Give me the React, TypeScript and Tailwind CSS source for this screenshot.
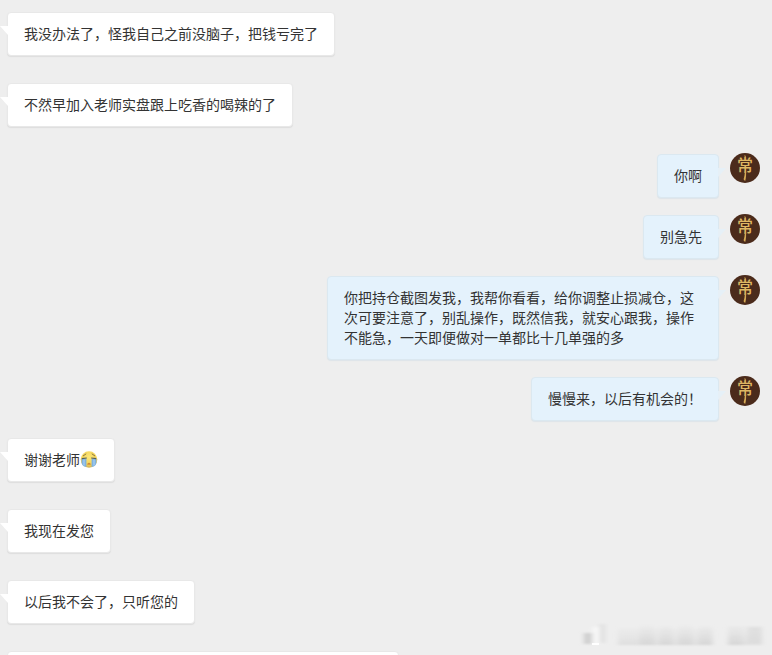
import React from "react";

type Message = {
  id: number;
  from: "student" | "teacher";
  text: string;
  crying?: boolean;
};

const messages: Message[] = [
  { id: 1, from: "student", text: "我没办法了，怪我自己之前没脑子，把钱亏完了" },
  { id: 2, from: "student", text: "不然早加入老师实盘跟上吃香的喝辣的了" },
  { id: 3, from: "teacher", text: "你啊" },
  { id: 4, from: "teacher", text: "别急先" },
  {
    id: 5,
    from: "teacher",
    text: "你把持仓截图发我，我帮你看看，给你调整止损减仓，这次可要注意了，别乱操作，既然信我，就安心跟我，操作不能急，一天即便做对一单都比十几单强的多",
  },
  { id: 6, from: "teacher", text: "慢慢来，以后有机会的！" },
  { id: 7, from: "student", text: "谢谢老师", crying: true },
  { id: 8, from: "student", text: "我现在发您" },
  { id: 9, from: "student", text: "以后我不会了，只听您的" },
];

function CryingFace() {
  return (
    <svg viewBox="0 0 18 18" className="inline-block h-[18px] w-[18px] align-middle" aria-label="大哭">
      <defs>
        <radialGradient id="face" cx="50%" cy="35%" r="65%">
          <stop offset="0" stopColor="#fbe77c" />
          <stop offset="0.7" stopColor="#f3d255" />
          <stop offset="1" stopColor="#cfb057" />
        </radialGradient>
      </defs>
      <circle cx="9" cy="9.500" r="8.300" fill="url(#face)" />
      <path d="M3 6 6.200 3.800M11.800 3.800 15 6" stroke="#7d6a3c" strokeWidth="0.9" fill="none" />
      <path d="M1.600 9h4.800v7.800c-2.600.4-4.800-1.800-4.800-4.800zM16.400 9h-4.800v7.800c2.600.4 4.800-1.800 4.800-4.800z" fill="#7fb2e0" />
      <path d="M4 9.400v6M14 9.400v6" stroke="#a9d0ee" strokeWidth="1.200" />
      <path d="M1.800 8.600 6.800 8M16.200 8.600l-5-.6" stroke="#4f5f66" strokeWidth="1.200" fill="none" />
      <path d="M7.200 14.800c0-2.800 3.600-2.800 3.600 0z" fill="#cf8a3a" />
    </svg>
  );
}

function Avatar() {
  return (
    <svg viewBox="0 0 30 30" className="-mt-px h-[30px] w-[30px] shrink-0" role="img">
      <circle cx="15" cy="15" r="15" fill="#4b2b1b" />
      <text
        x="15"
        y="18"
        textAnchor="middle"
        fontSize="16"
        fontWeight="500"
        fontFamily="'Noto Sans CJK SC', sans-serif"
        fill="#dfb763"
      >
        常
      </text>
      <path
        d="M14.600 2c1 .6 1.600 1.600 1.200 3.400l-1.200.2zM14.800 18h1.200c.2 3.400.2 6.600-.8 10-.6-.4-1.200-1-1.600-1.800.8-2.400 1.200-5 1.200-8.200z"
        fill="#d6aa55"
      />
    </svg>
  );
}

function Tail({ side }: { side: "left" | "right" }) {
  if (side === "left") {
    return (
      <svg viewBox="0 0 8 9" className="absolute -left-2 top-[13px] h-[9px] w-2">
        <path d="M0 0h8v9z" fill="#fff" />
      </svg>
    );
  }
  return (
    <svg viewBox="0 0 8 9" className="absolute -right-2 top-[13px] h-[9px] w-2">
      <path d="M8 0H0v9z" fill="#e6f0f7" />
    </svg>
  );
}

function StudentBubble({ message }: { message: Message }) {
  return (
    <div className="flex pb-[27px] pl-[7px]">
      <div className="relative rounded border border-[#e8e8e8] bg-white px-4 pb-3 pt-[10px] shadow-[0_1px_1px_#dddddd]">
        <Tail side="left" />
        <p className="flex items-center">
          {message.text}
          {message.crying && <CryingFace />}
        </p>
      </div>
    </div>
  );
}

function TeacherBubble({ message }: { message: Message }) {
  return (
    <div className="flex items-start justify-end gap-[11px] pb-[17px] pr-3">
      <div className="relative max-w-[392px] rounded border border-[#dbe8f0] bg-[#e4f2fc] px-4 pb-3 pt-[10px] shadow-[0_1px_1px_#dde4e9]">
        <Tail side="right" />
        <p>{message.text}</p>
      </div>
      <Avatar />
    </div>
  );
}

// Smudged mark in the bottom corner
function Watermark() {
  return (
    <svg viewBox="0 0 190 32" className="absolute bottom-1 right-1 h-8 w-[190px]" aria-hidden="true">
      <defs>
        <filter id="smudge" x="-20%" y="-40%" width="140%" height="180%">
          <feGaussianBlur stdDeviation="2.5 1.2" />
        </filter>
        <linearGradient id="fade" x1="0" y1="0" x2="0" y2="1">
          <stop offset="0" stopColor="#dedede" stopOpacity="0.3" />
          <stop offset="1" stopColor="#cecece" />
        </linearGradient>
      </defs>
      <g filter="url(#smudge)">
        <rect x="6" y="14" width="8" height="11" fill="#cfcfcf" />
        <rect x="22" y="5" width="5" height="19" fill="#e0e0e0" />
        <rect x="40" y="9" width="95" height="17" fill="url(#fade)" opacity="0.5" />
        <rect x="62" y="6" width="14" height="20" fill="url(#fade)" opacity="0.5" />
        <rect x="82" y="7" width="12" height="19" fill="url(#fade)" opacity="0.5" />
        <rect x="101" y="6" width="13" height="20" fill="url(#fade)" opacity="0.5" />
        <rect x="121" y="7" width="13" height="19" fill="url(#fade)" opacity="0.5" />
        <rect x="150" y="7" width="34" height="19" fill="url(#fade)" opacity="0.5" />
        <rect x="150" y="8" width="14" height="18" fill="url(#fade)" opacity="0.5" />
        <rect x="170" y="8" width="14" height="16" fill="#d8d8d8" opacity="0.6" />
        <rect x="15" y="8" width="6" height="17" fill="#f8f8f8" />
      </g>
      <path d="M14 25h7" stroke="#fff" strokeWidth="2" />
    </svg>
  );
}

export default function App() {
  return (
    <main className="relative h-screen w-full overflow-hidden bg-[#eeeeee] pt-3 font-['Noto_Sans_CJK_SC',sans-serif] text-[14px] leading-5 text-[#333333]">
      {messages.map((message) =>
        message.from === "student" ? (
          <StudentBubble key={message.id} message={message} />
        ) : (
          <TeacherBubble key={message.id} message={message} />
        )
      )}

      {/* Next message, cut off by the window */}
      <div className="ml-[7px] h-11 w-full max-w-[392px] rounded border border-[#e8e8e8] bg-white"></div>

      <Watermark />
    </main>
  );
}
